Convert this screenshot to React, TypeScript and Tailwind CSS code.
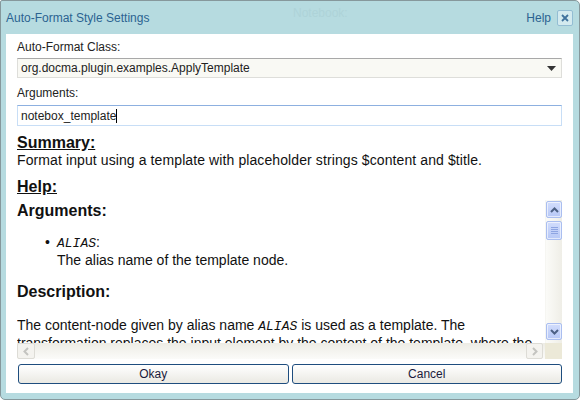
import React from "react";

function ChevronUp({ color = "#4d6185" }: { color?: string }) {
  return (
    <svg width="9" height="6" viewBox="0 0 9 6">
      <path d="M1 5 L4.5 1.5 L8 5" fill="none" stroke={color} strokeWidth="2" />
    </svg>
  );
}

function ChevronDown({ color = "#4d6185" }: { color?: string }) {
  return (
    <svg width="9" height="6" viewBox="0 0 9 6">
      <path d="M1 1 L4.5 4.5 L8 1" fill="none" stroke={color} strokeWidth="2" />
    </svg>
  );
}

function ChevronSide({ dir }: { dir: "left" | "right" }) {
  const d = dir === "left" ? "M5 1 L1.5 4.5 L5 8" : "M1 1 L4.5 4.5 L1 8";
  return (
    <svg width="6" height="9" viewBox="0 0 6 9">
      <path d={d} fill="none" stroke="#c4c4c0" strokeWidth="2" />
    </svg>
  );
}

const blueBtn =
  "flex items-center justify-center rounded-[2px] border border-[#aabef0] bg-gradient-to-b from-[#d2ddfc] to-[#b7c8f6] shadow-[inset_0_0_0_1px_rgba(255,255,255,0.6)]";

const mono = "font-['Liberation_Mono','Courier_New',monospace] italic text-[13px]";

export default function App() {
  return (
    <div className="w-[580px] h-[400px] bg-white font-['Liberation_Sans',Arial,sans-serif]">
      <div className="relative flex flex-col w-full h-full bg-[#b6dbe0] border border-[#86989c] rounded-[5px] rounded-tl-[2px]">
        {/* title bar */}
        <span className="absolute left-[292px] top-[3px] text-[12px] text-[#aed3d8]">Notebook:</span>
        <div className="relative flex items-center h-[33px] pl-[5px] pr-[6px]">
          <span className="text-[12px] text-[#2b6391]">Auto-Format Style Settings</span>
          <span className="ml-auto text-[12px] text-[#2b6391]">Help</span>
          <div className="ml-[6px] flex items-center justify-center w-[16px] h-[16px] rounded-[2px] border border-[#93bdd3] bg-[#d3eaef]">
            <svg width="8" height="8" viewBox="0 0 8 8">
              <path d="M1 1 L7 7 M7 1 L1 7" stroke="#3f729d" strokeWidth="1.8" />
            </svg>
          </div>
        </div>

        {/* panel */}
        <div className="flex flex-col flex-1 ml-[5px] mr-[6px] mb-[6px] bg-white px-[11px] pt-[6px] pb-[9px] text-[#222]">
          <div className="text-[12px] leading-[14px]">Auto-Format Class:</div>
          <div className="mt-[4px] flex items-center h-[20px] pl-[3px] pr-[5px] bg-[#f9f9f4] border border-[#dededa] border-t-[#a8a8a8] text-[12px]">
            <span>org.docma.plugin.examples.ApplyTemplate</span>
            <svg className="ml-auto" width="9" height="5" viewBox="0 0 9 5">
              <path d="M0 0 H9 L4.5 5 Z" fill="#333" />
            </svg>
          </div>
          <div className="mt-[8px] text-[12px] leading-[14px]">Arguments:</div>
          <div className="mt-[5px] flex items-center h-[21px] pl-[3px] border border-[#c8def6] border-t-[#8db0e0] text-[12px]">
            <span>notebox_template</span>
            <span className="w-[1px] h-[14px] bg-black" />
          </div>

          <div className="mt-[8px] text-[16px] leading-[18px] font-bold underline text-[#111]">Summary:</div>
          <div className="text-[14px] leading-[16px] text-[#111] tracking-[0.1px]">
            Format input using a template with placeholder strings $content and $title.
          </div>
          <div className="mt-[10px] text-[16px] leading-[18px] font-bold underline text-[#111]">Help:</div>

          {/* scroll area */}
          <div className="mt-[4px] flex flex-col h-[159px]">
            <div className="flex h-[143px]">
              <div className="flex-1 overflow-hidden text-[#111]">
                <div className="mt-[2px] text-[16px] leading-[18px] font-bold">Arguments:</div>
                <div className="mt-[14px] flex text-[14px] leading-[16px]">
                  <span className="w-[40px] pl-[28px]">•</span>
                  <div>
                    <div>
                      <span className={mono}>ALIAS</span>:
                    </div>
                    <div>The alias name of the template node.</div>
                  </div>
                </div>
                <div className="mt-[15px] text-[16px] leading-[18px] font-bold">Description:</div>
                <div className="mt-[16px] text-[14px] leading-[16px] whitespace-nowrap">
                  The content-node given by alias name <span className={mono}>ALIAS</span> is used as a template. The
                  <br />
                  transformation replaces the input element by the content of the template, where the
                </div>
              </div>
              {/* vertical scrollbar */}
              <div className="flex flex-col w-[17px] bg-gradient-to-r from-[#fbfbf8] to-[#efeee7] border-l border-[#f6f6f2]">
                <div className={`${blueBtn} mt-[1px] h-[17px] w-[16px]`}>
                  <ChevronUp />
                </div>
                <div className={`${blueBtn} mt-[3px] h-[19px] w-[16px] flex-col gap-[1px]`}>
                  <span className="w-[7px] h-[1px] bg-[#8ea5e2]" />
                  <span className="w-[7px] h-[1px] bg-[#8ea5e2]" />
                  <span className="w-[7px] h-[1px] bg-[#8ea5e2]" />
                  <span className="w-[7px] h-[1px] bg-[#8ea5e2]" />
                </div>
                <div className={`${blueBtn} mt-auto mb-[3px] h-[17px] w-[16px]`}>
                  <ChevronDown />
                </div>
              </div>
            </div>
            <div className="flex h-[16px]">
              <div className="flex flex-1 items-center bg-gradient-to-b from-[#edece5] to-[#fbfbf9]">
                <div className="flex items-center justify-center w-[18px] h-[16px] border border-[#dddcd6] rounded-[2px] bg-[#f4f3ef]">
                  <ChevronSide dir="left" />
                </div>
                <div className="ml-auto mr-[2px] flex items-center justify-center w-[17px] h-[16px] border border-[#dddcd6] rounded-[2px] bg-[#f4f3ef]">
                  <ChevronSide dir="right" />
                </div>
              </div>
              <div className="w-[17px] bg-[#ece9d8]" />
            </div>
          </div>

          {/* buttons */}
          <div className="mt-[5px] flex gap-[3px] pl-[1px]">
            <button className="flex-1 h-[20px] border border-[#1e4d7e] rounded-[3px] bg-gradient-to-b from-white to-[#eae9e3] text-[12px] text-[#1b1b3c]">
              Okay
            </button>
            <button className="flex-1 h-[20px] border border-[#1e4d7e] rounded-[3px] bg-gradient-to-b from-white to-[#eae9e3] text-[12px] text-[#1b1b3c]">
              Cancel
            </button>
          </div>
        </div>
      </div>
    </div>
  );
}
